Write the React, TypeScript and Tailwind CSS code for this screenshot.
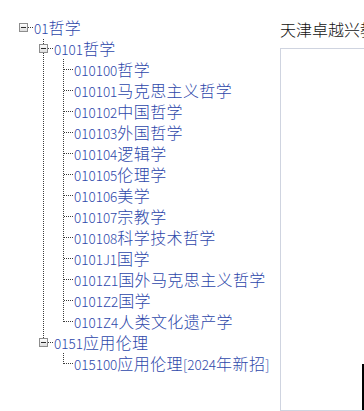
import React from "react";

type TreeNode = { label: string; children?: TreeNode[] };

const tree: TreeNode = {
  label: "01哲学",
  children: [
    {
      label: "0101哲学",
      children: [
        { label: "010100哲学" },
        { label: "010101马克思主义哲学" },
        { label: "010102中国哲学" },
        { label: "010103外国哲学" },
        { label: "010104逻辑学" },
        { label: "010105伦理学" },
        { label: "010106美学" },
        { label: "010107宗教学" },
        { label: "010108科学技术哲学" },
        { label: "0101J1国学" },
        { label: "0101Z1国外马克思主义哲学" },
        { label: "0101Z2国学" },
        { label: "0101Z4人类文化遗产学" },
      ],
    },
    {
      label: "0151应用伦理",
      children: [{ label: "015100应用伦理[2024年新招]" }],
    },
  ],
};

type Row = { node: TreeNode; depth: number; hasNext: boolean; rails: boolean[] };

// rails[k] = does the ancestor at depth k still have siblings below (draw a vertical line)
function flatten(node: TreeNode, depth: number, hasNext: boolean, rails: boolean[], out: Row[]) {
  out.push({ node, depth, hasNext, rails });
  const kids = node.children ?? [];
  kids.forEach((kid, i) => {
    flatten(kid, depth + 1, i < kids.length - 1, [...rails, depth > 0 && hasNext], out);
  });
  return out;
}

const DOT = "#3a3a3a";

function Rail({ on, phase }: { on: boolean; phase: number }) {
  return (
    <svg width="20" height="21" className="shrink-0" shapeRendering="crispEdges">
      {on && (
        <line x1="10.5" y1="0" x2="10.5" y2="21" stroke={DOT} strokeDasharray="1 1" strokeDashoffset={phase} />
      )}
    </svg>
  );
}

function Joint({ depth, hasNext, folder, phase }: { depth: number; hasNext: boolean; folder: boolean; phase: number }) {
  return (
    <svg width="20" height="21" className="shrink-0" shapeRendering="crispEdges">
      {depth > 0 && (
        <line x1="10.5" y1="0" x2="10.5" y2={hasNext ? 21 : 11} stroke={DOT} strokeDasharray="1 1" strokeDashoffset={phase} />
      )}
      <line x1={folder ? 15 : 11} y1="10.5" x2="20" y2="10.5" stroke={DOT} strokeDasharray="1 1" />
      {folder && (
        <g>
          <defs>
            <linearGradient id="box" x1="0" y1="0" x2="0" y2="1">
              <stop offset="0" stopColor="#ffffff" />
              <stop offset="1" stopColor="#dcdcdc" />
            </linearGradient>
          </defs>
          <rect x="6.5" y="6.5" width="8" height="8" fill="url(#box)" stroke="#8d8d8d" />
          <line x1="8" y1="10.5" x2="13" y2="10.5" stroke="#2b2b2b" />
        </g>
      )}
    </svg>
  );
}

function Label({ text }: { text: string }) {
  const parts = text.split(/([\u4e00-\u9fff]+)/).filter(Boolean);
  return (
    <span className="pl-[1px] whitespace-nowrap text-[#2d47aa] leading-[21px] font-light [font-family:'Noto_Sans_CJK_SC',sans-serif]">
      {parts.map((p, i) =>
        /[\u4e00-\u9fff]/.test(p) ? (
          <span key={i} className="text-[16px] tracking-[0.4px]">
            {p}
          </span>
        ) : (
          <span key={i} className="text-[13.5px]">
            {p}
          </span>
        )
      )}
    </span>
  );
}

export default function App() {
  const rows = flatten(tree, 0, false, [], []);

  return (
    <div className="h-screen w-[364px] overflow-hidden flex bg-white">
      <div className="w-[280px] shrink-0 pt-[17px] pl-[13px]">
        {rows.map((r, idx) => {
          const phase = (idx * 21) % 2;
          return (
            <div key={idx} className="flex items-center h-[21px]">
              {r.rails.map((on, k) => (
                <Rail key={k} on={on} phase={phase} />
              ))}
              <Joint depth={r.depth} hasNext={r.hasNext} folder={!!r.node.children} phase={phase} />
              <Label text={r.node.label} />
            </div>
          );
        })}
      </div>

      <div className="flex-1 flex flex-col pt-[19px] min-w-0">
        <div className="h-[20px] leading-[20px] text-[16px] text-[#111] font-light whitespace-nowrap [font-family:'Noto_Sans_CJK_SC',sans-serif]">
          天津卓越兴教育科技有限公司
        </div>
        <div className="mt-[9px] flex-1 w-[500px] border border-[#cfd4e0] pt-[315px] pl-[81px]">
          <div className="h-full border-l-2 border-black" />
        </div>
      </div>
    </div>
  );
}
